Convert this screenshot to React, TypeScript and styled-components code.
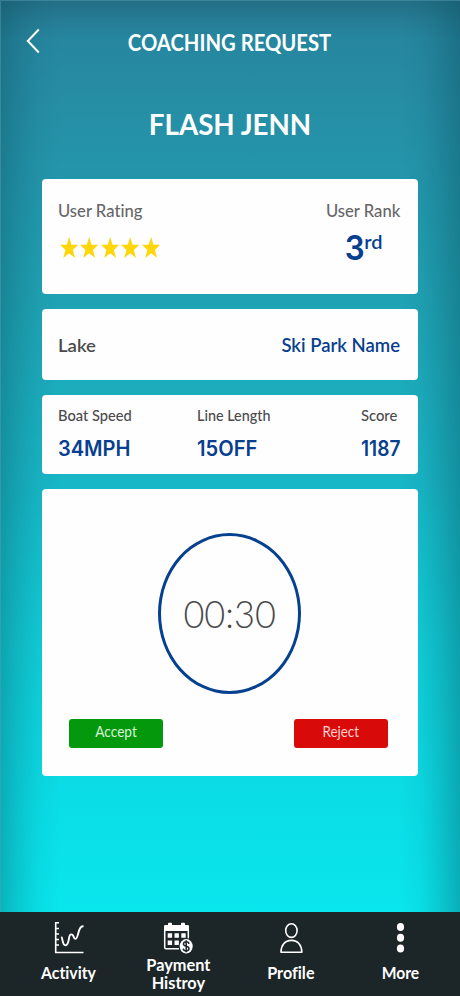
import React from "react";
import styled, { createGlobalStyle } from "styled-components";

const GlobalStyle = createGlobalStyle`
  *, *::before, *::after { box-sizing: border-box; }
  body { margin: 0; font-family: Lato, "Liberation Sans", sans-serif; font-variant-ligatures: none; }
`;

const Screen = styled.div`
  width: 460px;
  height: 996px;
  overflow: hidden;
  display: flex;
  flex-direction: column;
  background: #1c2528;
`;

const Main = styled.main`
  height: 911.5px;
  flex: none;
  background:
    linear-gradient(90deg, rgba(8, 70, 85, 0.32) 0, rgba(8, 70, 85, 0.18) 18px, rgba(8, 70, 85, 0.06) 38px, rgba(8, 70, 85, 0) 60px),
    linear-gradient(270deg, rgba(8, 70, 85, 0.35) 0, rgba(8, 70, 85, 0.2) 18px, rgba(8, 70, 85, 0.06) 38px, rgba(8, 70, 85, 0) 60px),
    linear-gradient(180deg, rgba(30, 80, 100, 0.4) 0, rgba(30, 80, 100, 0.15) 20px, rgba(30, 80, 100, 0) 40px),
    linear-gradient(180deg, #26829b 0, #268ba3 80px, #2494aa 160px, #1fa3b4 300px, #18b6c6 480px, #10cfd9 650px, #0bdce5 790px, #09e6ec 911px);
  box-shadow: inset 1px 1px 0 rgba(90, 160, 185, 0.45);
`;

/* Type is slightly condensed or widened horizontally through $fit. */
const Label = styled.span<{ $size: number; $line: number; $weight?: number; $color?: string; $fit?: number; $from?: string; $inter?: boolean }>`
  display: block;
  width: max-content;
  white-space: nowrap;
  font-family: ${p => (p.$inter ? "Inter, Lato" : "Lato, Inter")}, sans-serif;
  font-size: ${p => p.$size}px;
  line-height: ${p => p.$line}px;
  font-weight: ${p => p.$weight ?? 500};
  color: ${p => p.$color ?? "#4a4a4c"};
  transform: scaleX(${p => p.$fit ?? 1});
  transform-origin: ${p => p.$from ?? "left"} center;
`;

const Header = styled.header`
  height: 83px;
  padding-top: 2px;
  display: grid;
  grid-template-columns: 60px 1fr 60px;
  align-items: center;
  justify-items: center;
`;

const BackButton = styled.button`
  padding: 0;
  border: 0;
  background: none;
  display: flex;
  margin: 0 0 3px 5px;
`;

const NameBar = styled.div`
  height: 95.5px;
  padding-bottom: 14.5px;
  display: flex;
  align-items: center;
  justify-content: center;
`;

const Cards = styled.section`
  margin: 0 42px;
  display: flex;
  flex-direction: column;
  gap: 15px;
`;

const Card = styled.div<{ $h: number }>`
  height: ${p => p.$h}px;
  background: #fefefe;
  border-radius: 4px;
`;

const RatingCard = styled(Card)`
  padding: 21.5px 18px 0 16px;
  display: flex;
  justify-content: space-between;
`;

const Stars = styled.div`
  display: flex;
  gap: 2.2px;
  margin: 15px 0 0 2px;
`;

const RankColumn = styled.div`
  display: flex;
  flex-direction: column;
  align-items: flex-end;
`;

const Rank = styled.div`
  display: flex;
  align-items: flex-start;
  margin: 5.5px 17.5px 0 0;
`;

const LakeCard = styled(Card)`
  padding: 0 18px 0 16px;
  display: flex;
  align-items: center;
  justify-content: space-between;
`;

const StatsCard = styled(Card)`
  padding: 10.5px 0 0 16px;
  display: grid;
  grid-template-columns: 139px 164px 1fr;
`;

const Stat = styled.div`
  display: flex;
  flex-direction: column;
  gap: 10px;
`;

const TimerCard = styled(Card)`
  padding: 44px 30px 0 27px;
  display: flex;
  flex-direction: column;
  align-items: center;
`;

const Dial = styled.div`
  width: 143px;
  height: 161px;
  margin-left: 2px;
  padding-bottom: 1px;
  border: 3px solid #06418f;
  border-radius: 50%;
  display: flex;
  align-items: center;
  justify-content: center;
`;

const Actions = styled.div`
  width: 100%;
  margin-top: 25px;
  display: flex;
  justify-content: space-between;
`;

const ActionButton = styled.button<{ $bg: string }>`
  width: 94px;
  height: 29px;
  padding: 0 0 2px;
  border: 0;
  border-radius: 3px;
  background: ${p => p.$bg};
  display: flex;
  align-items: center;
  justify-content: center;
`;

const Nav = styled.nav`
  flex: 1;
  padding: 10.5px 0 0 14px;
  display: grid;
  grid-template-columns: 109px 110px 115px 104px;
`;

const NavItem = styled.div<{ $gap: number }>`
  display: flex;
  flex-direction: column;
  align-items: center;
  text-align: center;
  svg { flex: none; margin-bottom: ${p => p.$gap}px; }
`;

const BLUE = "#083f8f";

const Star = () => (
  <svg width="18.3" height="21" viewBox="0 0 18.3 21">
    <path fill="#ffd60a" d="M9.15 0l2.4 7.7h6.75l-5.4 5.3 2.1 8-5.85-4.8L3.3 21l2.1-8L0 7.7h6.75z" />
  </svg>
);

const ActivityIcon = () => (
  <svg width="30" height="32" viewBox="0 0 30 32" fill="none" stroke="#fff">
    <path strokeWidth="1.6" d="M5 .8H1.7v29.7H29.5M2 6.5h3M2 12h3M2 17.5h3M2 23h3" />
    <path strokeWidth="1.9" strokeLinecap="round" strokeLinejoin="round" d="M7.8 15.5c1.3 4 .9 8 3.8 7.8 4.3-.3 2.2-10.4 5.4-10.9 3.4-.4 1.9 4.7 4.4 4.4C25 16.3 23.5 4.5 28.8 4.2" />
  </svg>
);

const CalendarIcon = () => (
  <svg width="31" height="33" viewBox="0 0 31 33">
    <path fill="#fff" d="M1 4.2Q1 3 2.2 3H5V1.5Q5 .7 6 .7H8Q9 .7 9 1.5V3h9V1.5Q18 .7 19 .7h2Q22 .7 22 1.5V3h2.8Q26 3 26 4.2V9H1z" />
    <path fill="none" stroke="#fff" strokeWidth="1.5" d="M1.7 8v17.5q0 1.3 1.3 1.3h13M25.3 8v9" />
    <path fill="#fff" d="M4.7 11.3h4.4v4.5H4.7zM11.5 11.3h4.4v4.5h-4.4zM18.3 11.3h4.4v4.5h-4.4zM4.7 18.5h4.4V23H4.7zM11.5 18.5h4.4V23h-4.4z" />
    <ellipse cx="23.2" cy="24.3" rx="7.6" ry="8.4" fill="#1c2528" />
    <ellipse cx="23.2" cy="24.3" rx="6.5" ry="7.3" fill="#fff" />
    <path fill="none" stroke="#1c2528" strokeWidth="1.5" d="M26 21.8c-.2-1.4-1.2-2.1-2.8-2.1-1.7 0-2.7.8-2.7 2.2 0 3.1 5.5 1.6 5.5 4.7 0 1.5-1.1 2.4-2.8 2.4-1.8 0-2.8-.9-3-2.4M23.2 18.3v12" />
  </svg>
);

const ProfileIcon = () => (
  <svg width="24" height="32" viewBox="0 0 24 32" fill="none" stroke="#fff" strokeWidth="1.6">
    <ellipse cx="12.4" cy="8.6" rx="5.7" ry="6.8" />
    <path strokeLinejoin="round" d="M2 30.2c0-7 3.8-11.8 10.4-11.8s10.4 4.8 10.4 11.8z" />
  </svg>
);

const MoreIcon = () => (
  <svg width="10" height="32" viewBox="0 0 10 32" fill="#fff">
    <ellipse cx="5.5" cy="5" rx="3.6" ry="4" />
    <ellipse cx="5.5" cy="15.8" rx="3.6" ry="4" />
    <ellipse cx="5.5" cy="26.6" rx="3.6" ry="4" />
  </svg>
);

const stats = [
  { label: "Boat Speed", value: "34MPH", labelFit: 1.01, valueFit: 0.955 },
  { label: "Line Length", value: "15OFF", labelFit: 0.99, valueFit: 0.96 },
  { label: "Score", value: "1187", labelFit: 1.02, valueFit: 0.91 },
];

export default function App() {
  return (
    <Screen>
      <GlobalStyle />
      <Main>
        <Header>
          <BackButton aria-label="Back">
            <svg width="14" height="26" viewBox="0 0 14 26" fill="none" stroke="#fff" strokeWidth="2">
              <path d="M12.8 1.5L1.8 13l11 11.5" />
            </svg>
          </BackButton>
          <Label $size={22} $line={26} $weight={700} $color="#fff" $fit={0.92} $from="center">COACHING REQUEST</Label>
        </Header>
        <NameBar>
          <Label $size={28} $line={34} $weight={700} $color="#fff" $fit={0.99} $from="center">FLASH JENN</Label>
        </NameBar>
        <Cards>
          <RatingCard $h={115.5}>
            <div>
              <Label $size={17.5} $line={22} $color="#666668" $fit={0.95}>User Rating</Label>
              <Stars>{[0, 1, 2, 3, 4].map(i => <Star key={i} />)}</Stars>
            </div>
            <RankColumn>
              <Label $size={17.5} $line={22} $color="#666668" $fit={0.95} $from="right">User Rank</Label>
              <Rank>
                <Label $size={34} $line={40} $weight={600} $color={BLUE} $fit={0.92} $from="right" $inter>3</Label>
                <Label $size={20} $line={27} $weight={600} $color={BLUE} $from="right">rd</Label>
              </Rank>
            </RankColumn>
          </RatingCard>
          <LakeCard $h={71}>
            <Label $size={18} $line={22} $weight={600} $fit={1.03}>Lake</Label>
            <Label $size={18.5} $line={22} $weight={600} $color={BLUE} $from="right">Ski Park Name</Label>
          </LakeCard>
          <StatsCard $h={78.5}>
            {stats.map(s => (
              <Stat key={s.label}>
                <Label $size={14.5} $line={20} $fit={s.labelFit}>{s.label}</Label>
                <Label $size={21} $line={26} $weight={600} $color={BLUE} $fit={s.valueFit} $inter>{s.value}</Label>
              </Stat>
            ))}
          </StatsCard>
          <TimerCard $h={287.5}>
            <Dial>
              <Label $size={38} $line={44} $weight={300} $fit={0.95} $from="center">00:30</Label>
            </Dial>
            <Actions>
              <ActionButton $bg="#04980d">
                <Label $size={14.5} $line={18} $weight={400} $color="#d9f3d6" $fit={0.94} $from="center">Accept</Label>
              </ActionButton>
              <ActionButton $bg="#d90a0a">
                <Label $size={14.5} $line={18} $weight={400} $color="#fbd0cc" $fit={0.93} $from="center">Reject</Label>
              </ActionButton>
            </Actions>
          </TimerCard>
        </Cards>
      </Main>
      <Nav>
        <NavItem $gap={8}>
          <ActivityIcon />
          <Label $size={17} $line={22} $weight={700} $color="#fff" $fit={0.93} $from="center">Activity</Label>
        </NavItem>
        <NavItem $gap={1}>
          <CalendarIcon />
          <Label $size={17} $line={17.5} $weight={700} $color="#fff" $fit={0.96} $from="center">Payment<br />Histroy</Label>
        </NavItem>
        <NavItem $gap={8}>
          <ProfileIcon />
          <Label $size={17} $line={22} $weight={700} $color="#fff" $fit={0.95} $from="center">Profile</Label>
        </NavItem>
        <NavItem $gap={8}>
          <MoreIcon />
          <Label $size={17} $line={22} $weight={700} $color="#fff" $fit={0.92} $from="center">More</Label>
        </NavItem>
      </Nav>
    </Screen>
  );
}
